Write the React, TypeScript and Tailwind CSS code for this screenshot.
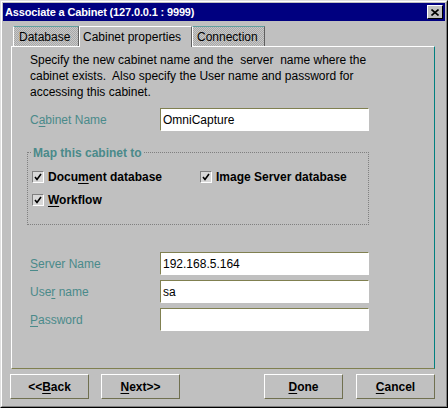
import React from "react";

const F = "font-['Liberation_Sans',Arial,sans-serif]";

function Field({ value }: { value: string }) {
  return (
    <div className="w-[209px] h-[23px] bg-white border border-t-[#808050] border-l-[#808050] border-b-white border-r-white flex items-center pl-[2px] text-[12px] text-black">
      {value}
    </div>
  );
}

function Label({ pre, u, post }: { pre: string; u: string; post: string }) {
  return (
    <div className="w-[130px] text-[12px] text-[#4a8a8a]">
      {pre}
      <u className="underline underline-offset-2">{u}</u>
      {post}
    </div>
  );
}

function Check({ children }: { children: React.ReactNode }) {
  return (
    <div className="flex items-center gap-[4px] h-[18px]">
      <div className="w-[12px] h-[12px] border border-t-[#808080] border-l-[#808080] border-b-white border-r-white bg-[#d8d8d8] flex items-center justify-center">
        <svg width="8" height="8" viewBox="0 0 8 8">
          <path d="M1 4 L3 6.5 L7 1" stroke="black" strokeWidth="1.6" fill="none" />
        </svg>
      </div>
      <span className="text-[12px] font-bold text-black">{children}</span>
    </div>
  );
}

function Btn({ children }: { children: React.ReactNode }) {
  return (
    <div className="w-[79px] h-[25px] border border-t-white border-l-white border-b-[#707050] border-r-[#707050] flex items-center justify-center text-[12px] font-bold text-black">
      {children}
    </div>
  );
}

export default function App() {
  return (
    <div className={`${F} w-[448px] h-[408px] bg-[#c0c0c0] border border-t-[#dfdfdf] border-l-[#dfdfdf] border-r-black border-b-black`}>
      <div className="w-full h-full border border-t-white border-l-white border-r-[#808080] border-b-[#808080] p-[1px] flex flex-col">
        {/* title bar */}
        <div className="h-[18px] bg-[#000080] flex items-center justify-between pl-[2px] pr-[2px]">
          <span className="text-white font-bold text-[11px] tracking-[-0.15px] leading-none">Associate a Cabinet (127.0.0.1 : 9999)</span>
          <div className="w-[16px] h-[14px] bg-[#c0c0c0] border border-t-white border-l-white border-r-black border-b-black flex items-center justify-center">
            <svg width="8" height="7" viewBox="0 0 8 7">
              <path d="M0.5 0.5 L7.5 6.5 M7.5 0.5 L0.5 6.5" stroke="black" strokeWidth="1.6" />
            </svg>
          </div>
        </div>

        {/* tabs */}
        <div className="mt-[5px] ml-[10px] flex h-[20px] items-end">
          <div className="w-[66px] h-[20px] border-t border-l border-t-[#60a0a0] border-l-white border-r border-r-[#606060] bg-[repeating-conic-gradient(#a8a8a8_0_25%,#c8c8c8_0_50%)] bg-[length:2px_2px] flex items-center pl-[5px] text-[12px] text-black">
            Database
          </div>
          <div className="w-[113px] h-[21px] -mb-[1px] relative z-10 border-t border-l border-t-white border-l-white border-r border-r-[#606060] bg-[#c0c0c0] flex items-center pl-[3px] text-[12px] text-black">
            Cabinet properties
          </div>
          <div className="w-[73px] h-[20px] border-t border-l border-t-[#60a0a0] border-l-white border-r border-r-[#606060] bg-[repeating-conic-gradient(#a8a8a8_0_25%,#c8c8c8_0_50%)] bg-[length:2px_2px] flex items-center pl-[4px] text-[12px] text-black">
            Connection
          </div>
        </div>

        {/* panel */}
        <div className="ml-[8px] w-[424px] h-[323px] border border-t-white border-l-white border-b-[#808050] border-r-[#008080] border-r-dotted pl-[15px] pt-[5px]">
          <div className="pl-[3px] text-[12px] leading-[16px] text-black whitespace-pre">
            {"Specify the new cabinet name and the  server  name where the\ncabinet exists.  Also specify the User name and password for\naccessing this cabinet."}
          </div>

          <div className="mt-[8px] pl-[3px] flex items-center">
            <Label pre="C" u="a" post="binet Name" />
            <Field value="OmniCapture" />
          </div>

          <div className="mt-[21px] relative w-[342px] h-[73px] border border-dotted border-[#808080] pl-[4px] pt-[15px]">
            <span className="absolute -top-[9px] left-[4px] px-[1px] bg-[#c0c0c0] text-[12px] font-bold text-[#4a8a8a]">Map this cabinet to</span>
            <div className="flex">
              <div className="w-[168px]">
                <Check>
                  Docu<u className="underline underline-offset-2">m</u>ent database
                </Check>
              </div>
              <Check>Image Server database</Check>
            </div>
            <div className="mt-[5px]">
              <Check>
                <u className="underline underline-offset-2">W</u>orkflow
              </Check>
            </div>
          </div>

          <div className="mt-[27px] pl-[3px] flex flex-col gap-[5px]">
            <div className="flex items-center">
              <Label pre="" u="S" post="erver Name" />
              <Field value="192.168.5.164" />
            </div>
            <div className="flex items-center">
              <Label pre="Use" u="r" post=" name" />
              <Field value="sa" />
            </div>
            <div className="flex items-center">
              <Label pre="" u="P" post="assword" />
              <Field value="" />
            </div>
          </div>
        </div>

        {/* buttons */}
        <div className="mt-[5px] ml-[7px] w-[425px] flex">
          <Btn>
            &lt;&lt;<u className="underline underline-offset-2">B</u>ack
          </Btn>
          <div className="ml-[12px]">
            <Btn>
              <u className="underline underline-offset-2">N</u>ext&gt;&gt;
            </Btn>
          </div>
          <div className="ml-auto mr-[13px]">
            <Btn>
              <u className="underline underline-offset-2">D</u>one
            </Btn>
          </div>
          <Btn>
            <u className="underline underline-offset-2">C</u>ancel
          </Btn>
        </div>
      </div>
    </div>
  );
}
